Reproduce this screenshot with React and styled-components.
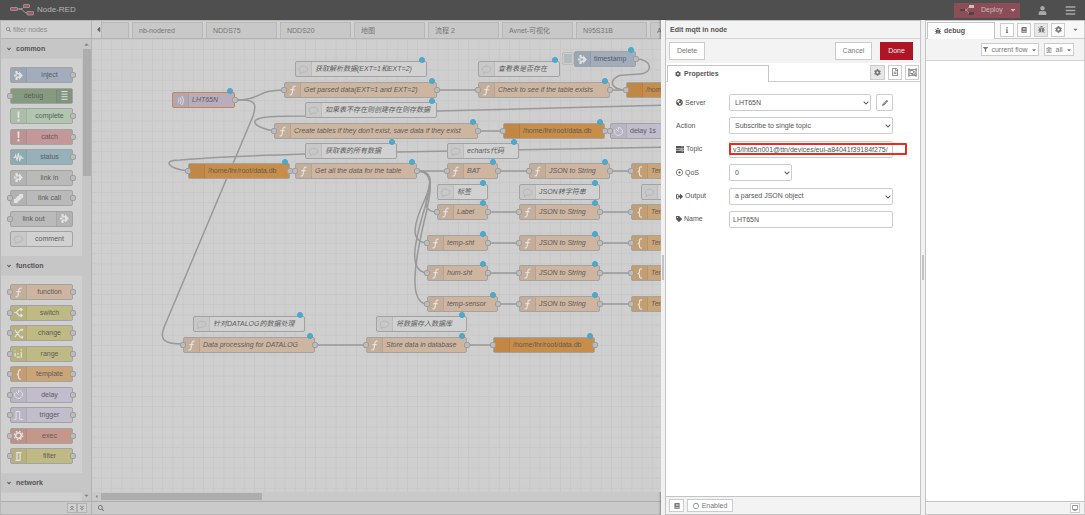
import React from 'react';
import styled, { createGlobalStyle, css } from 'styled-components';
import {
  FaAngleDoubleDown,
  FaAngleDoubleUp,
  FaAngleDown,
  FaBars,
  FaBook,
  FaBug,
  FaCaretDown,
  FaCaretLeft,
  FaCaretUp,
  FaChevronDown,
  FaCog,
  FaDesktop,
  FaFilter,
  FaGlobeAmericas,
  FaInfo,
  FaPencilAlt,
  FaRegCircle,
  FaRegDotCircle,
  FaRegFileAlt,
  FaRegObjectGroup,
  FaRegTrashAlt,
  FaSearch,
  FaSignOutAlt,
  FaTag,
  FaUser
} from 'react-icons/fa';

const colors = {
  inject: '#a1adbc',
  debug: '#869a80',
  complete: '#b1c6af',
  catch: '#c49899',
  status: '#96b1ba',
  link: '#bababa',
  comment: '#d1d1d1',
  function: '#cdb5a0',
  logic: '#bfba83',
  template: '#caa578',
  delay: '#c1bdcd',
  exec: '#c5978a',
  database: '#c88d48',
  mqtt: '#b9adbc'
};

const categories = [
  {
    title: 'common',
    nodes: [
      { label: 'inject', type: 'inject', icon: 'arrow', output: true },
      { label: 'debug', type: 'debug', icon: 'list', input: true, right: true },
      { label: 'complete', type: 'complete', icon: 'alert', output: true },
      { label: 'catch', type: 'catch', icon: 'alert', output: true },
      { label: 'status', type: 'status', icon: 'pulse', output: true },
      { label: 'link in', type: 'link', icon: 'arrow', output: true },
      { label: 'link call', type: 'link', icon: 'call', input: true, output: true },
      { label: 'link out', type: 'link', icon: 'arrow', input: true, right: true },
      { label: 'comment', type: 'comment', icon: 'bubble' }
    ]
  },
  {
    title: 'function',
    nodes: [
      { label: 'function', type: 'function', icon: 'func', input: true, output: true },
      { label: 'switch', type: 'logic', icon: 'fork', input: true, output: true },
      { label: 'change', type: 'logic', icon: 'swap', input: true, output: true },
      { label: 'range', type: 'logic', icon: 'range', input: true, output: true },
      { label: 'template', type: 'template', icon: 'brace', input: true, output: true },
      { label: 'delay', type: 'delay', icon: 'timer', input: true, output: true },
      { label: 'trigger', type: 'delay', icon: 'trigger', input: true, output: true },
      { label: 'exec', type: 'exec', icon: 'gear', input: true, output: true },
      { label: 'filter', type: 'logic', icon: 'filter', input: true, output: true }
    ]
  },
  { title: 'network', nodes: [] }
];

const flowTabs = ['nb-nodered', 'NDDS75', 'NDDS20', '地图', '流程 2', 'Avnet-可视化', 'N95S31B', 'A'];

const comment = (x, y, width, label) => ({ x, y, width, label, type: 'comment', icon: 'bubble', italic: true, changed: true });
const func = (x, y, width, label) => ({ x, y, width, label, type: 'function', icon: 'func', italic: true, input: true, output: true, changed: true });
const database = (x, y) => ({ x, y, width: 102, label: '/home/lhr/root/data.db', type: 'database', input: true, output: true, changed: true });
const template = (x, y) => ({ x, y, width: 72, label: 'Template', type: 'template', icon: 'brace', italic: true, input: true, output: true, changed: true });

// positions are relative to the top left corner of the canvas
const flowNodes = [
  { x: 80, y: 53, width: 63, label: 'LHT65N', type: 'mqtt', icon: 'waves', italic: true, output: true, changed: true, selected: true },
  comment(203, 22, 132, '获取解析数据(EXT=1和EXT=2)'),
  func(192, 43, 153, 'Get parsed data(EXT=1 and EXT=2)'),
  comment(213, 63, 132, '如果表不存在则创建存在则存数据'),
  func(182, 84, 204, "Create tables if they don't exist, save data if they exist"),
  comment(213, 104, 92, '获取表的所有数据'),
  database(96, 124),
  func(203, 124, 122, 'Get all the data for the table'),
  comment(386, 22, 82, '查看表是否存在'),
  func(386, 43, 132, 'Check to see if the table exists'),
  { x: 482, y: 12, width: 62, label: 'timestamp', type: 'inject', icon: 'arrow', output: true, changed: true, button: true },
  database(534, 43),
  database(411, 84),
  { x: 518, y: 84, width: 62, label: 'delay 1s', type: 'delay', icon: 'timer', input: true, output: true },
  comment(355, 104, 72, 'echarts代码'),
  func(355, 124, 51, 'BAT'),
  func(437, 124, 81, 'JSON to String'),
  template(539, 124),
  comment(345, 145, 51, '标签'),
  comment(427, 145, 81, 'JSON转字符串'),
  comment(549, 145, 62, 'Key'),
  func(345, 165, 51, 'Label'),
  func(427, 165, 81, 'JSON to String'),
  template(539, 165),
  func(335, 196, 61, 'temp-sht'),
  func(427, 196, 81, 'JSON to String'),
  template(539, 196),
  func(335, 226, 61, 'hum-sht'),
  func(427, 226, 81, 'JSON to String'),
  template(539, 226),
  func(335, 257, 71, 'temp-sensor'),
  func(427, 257, 81, 'JSON to String'),
  template(539, 257),
  comment(101, 277, 112, '针对DATALOG的数据处理'),
  func(91, 298, 132, 'Data processing for DATALOG'),
  comment(284, 277, 91, '将数据存入数据库'),
  func(274, 298, 101, 'Store data in database'),
  database(401, 298)
];

const wires = [
  'M143 61C170 61 164 51 192 51',
  'M143 61H150C163 61 165 65 161 77L73 286C67 300 70 305 91 305',
  'M182 92C160 88 159 81 169 79C176 77 200 77 213 77L345 72L580 66',
  'M96 132C74 129 71 121 88 121C110 119 150 117 213 115L305 113L580 108',
  'M198 132H203',
  'M345 51H386',
  'M518 51H534',
  'M544 20C560 20 562 34 548 35C530 36 528 35 522 40C518 45 522 51 534 51',
  'M386 92H411',
  'M513 92H518',
  'M325 132H355',
  'M325 132C341 132 339 142 336 154C332 166 334 173 345 173',
  'M325 132C342 132 339 146 333 160C322 184 317 203 335 204',
  'M325 132C343 132 339 150 333 168C322 205 316 232 335 234',
  'M325 132C344 132 339 155 332 183C323 222 316 264 335 265',
  'M406 132H437',
  'M518 132H539',
  'M396 173H427',
  'M508 173H539',
  'M396 204H427',
  'M508 204H539',
  'M396 234H427',
  'M508 234H539',
  'M406 265H427',
  'M508 265H539',
  'M223 306H274',
  'M375 306H401'
];

const GlobalStyle = createGlobalStyle`
  * {
    box-sizing: border-box;
  }

  body {
    margin: 0;
    background: #f3f3f3;
  }

  body, button, input, select {
    font-family: "Liberation Sans", "Noto Sans CJK SC", sans-serif;
    font-size: 7px;
    line-height: 10px;
    color: #555;
  }

  button {
    cursor: pointer;
    padding: 0;
  }

  svg {
    flex: none;
  }
`;

const Page = styled.div`
  display: grid;
  grid-template-rows: 20px minmax(0, 1fr);
  height: 100vh;
  overflow: hidden;
`;

const Header = styled.header`
  display: flex;
  align-items: center;
  padding: 0 9px 0 10px;
  background: #4f4f4f;
  color: #b5b5b5;
`;

const Brand = styled.div`
  display: flex;
  align-items: center;
  gap: 3px;
  margin-right: auto;
  font-size: 8px;
`;

const DeployButton = styled.button`
  display: flex;
  align-items: center;
  justify-content: space-between;
  width: 66px;
  height: 15px;
  padding: 0 3px 0 6px;
  border: 0;
  background: #8c4d57;
  color: #c8bdbf;

  span {
    margin: 0 auto 0 6px;
  }
`;

const HeaderButton = styled.button`
  display: flex;
  margin-left: 18px;
  border: 0;
  background: none;
  color: #a8a8a8;
`;

const Main = styled.main`
  display: grid;
  grid-template-columns: 92px minmax(0, 1fr) 4px 256px 4px 160px;
  min-height: 0;
`;

const Column = styled.div`
  display: flex;
  flex-direction: column;
  min-width: 0;
  min-height: 0;
  border-bottom: 1px solid ${props => (props.$shaded ? '#b5b5b5' : '#c4c4c4')};
  background: ${props => props.$background || '#fff'};
`;

const Palette = styled(Column)`
  border-left: 1px solid #b8b8b8;
  border-right: 1px solid #b3b3b3;
`;

const SearchBox = styled.label`
  display: flex;
  align-items: center;
  gap: 2px;
  height: 19px;
  padding: 0 5px;
  border-top: 1px solid #b8b8b8;
  border-bottom: 1px solid #b3b3b3;
  background: #d0d0d0;
  color: #858585;

  input {
    width: 100%;
    padding: 0;
    border: 0;
    background: none;
    outline: none;
  }

  input::placeholder {
    color: #8b8b8b;
  }
`;

const PaletteScroll = styled.div`
  display: grid;
  grid-template-columns: minmax(0, 1fr) 9px;
  flex: 1;
  min-height: 0;
`;

const PaletteList = styled.div`
  overflow: hidden;
  background: #d0d0d0;
`;

const CategoryTitle = styled.button`
  display: flex;
  align-items: center;
  gap: 4px;
  width: 100%;
  height: 20px;
  padding-left: 5px;
  border: 0;
  border-bottom: 1px solid #c9c9c9;
  background: #c6c6c6;
  color: #555;
  font-weight: bold;
`;

const CategoryBody = styled.div`
  display: flex;
  flex-direction: column;
  justify-content: space-between;
  min-height: 197px;
  padding: 8px 9px 9px;
`;

const VerticalScrollbar = styled.div`
  display: flex;
  flex-direction: column;
  justify-content: space-between;
  align-items: center;
  padding: 2px 0;
  background: #c6c6c6;
  color: #858585;
`;

const VerticalThumb = styled.div`
  width: 8px;
  height: 127px;
  margin: 1px 0 auto;
  background: #adadad;
`;

const Footer = styled.footer`
  display: flex;
  align-items: center;
  height: 13px;
  padding: 0 4px 0 6px;
  border-top: 1px solid #aeaeae;
  background: #cacaca;
  color: #777;
`;

const CollapseButton = styled.button`
  display: flex;
  align-items: center;
  justify-content: center;
  width: 10px;
  height: 10px;
  border: 1px solid #b2b2b2;
  background: #d0d0d0;
  color: #888;

  &:first-child {
    margin-left: auto;
  }
`;

const IconCell = styled.span`
  display: flex;
  align-items: center;
  justify-content: center;
  order: ${props => (props.$right ? 1 : 0)};
  width: 16px;
  background: rgba(0, 0, 0, 0.04);
  border-right: ${props => (props.$right ? 0 : '1px solid rgba(0, 0, 0, 0.06)')};
  border-left: ${props => (props.$right ? '1px solid rgba(0, 0, 0, 0.06)' : 0)};
`;

const NodeLabel = styled.span`
  flex: 1;
  white-space: nowrap;
`;

const nodeBox = css`
  position: relative;
  display: flex;
  height: 16px;
  border: 1px solid #a3a3a3;
  border-radius: 2px;
  background: ${props => colors[props.$type]};
  color: #5c5c5c;
  line-height: 14px;
`;

const PaletteNode = styled.div`
  ${nodeBox}
  text-align: center;
`;

const FlowNode = styled.div`
  ${nodeBox}
  position: absolute;
  left: ${props => props.$x}px;
  top: ${props => props.$y}px;
  width: ${props => props.$width}px;
  border-color: ${props => (props.$selected ? '#cb8450' : '#a3a3a3')};
  font-style: ${props => (props.$italic ? 'italic' : 'normal')};

  ${NodeLabel} {
    padding-left: 3px;
  }
`;

const Port = styled.span`
  position: absolute;
  top: 4px;
  ${props => props.$side}: -4px;
  width: 6px;
  height: 6px;
  border: 1px solid #9e9e9e;
  border-radius: 2px;
  background: #bcbcbc;
`;

const ChangedDot = styled.span`
  position: absolute;
  top: -5px;
  right: 1px;
  width: 6px;
  height: 6px;
  border: 1px solid #55a0bd;
  border-radius: 50%;
  background: #45acd3;
`;

const InjectButton = styled.button`
  position: absolute;
  top: 0;
  left: -13px;
  width: 12px;
  height: 13px;
  border: 1px solid #bdbdbd;
  border-radius: 2px;
  background: #b3bbc1;
  box-shadow: inset 0 0 0 1px #cccccc;
`;

const TabBar = styled.nav`
  display: flex;
  align-items: flex-end;
  gap: 3px;
  height: 19px;
  overflow: hidden;
  border-top: 1px solid #b8b8b8;
  border-bottom: 1px solid #b3b3b3;
  background: #d0d0d0;
`;

const TabScroll = styled.button`
  display: flex;
  align-items: center;
  flex: none;
  width: 10px;
  height: 17px;
  margin-right: -3px;
  padding-left: 2px;
  border: 0;
  border-right: 1px solid #b8b8b8;
  background: #d0d0d0;
  color: #666;
`;

const FlowTab = styled.button`
  flex: none;
  width: ${props => (props.$cut ? 27 : 71)}px;
  height: 16px;
  padding-left: 6px;
  border: 1px solid #b8b8b8;
  border-width: 1px 1px 0 ${props => (props.$cut ? 0 : 1)}px;
  background: #c8c8c8;
  color: #777;
  text-align: left;
`;

const Canvas = styled.div`
  position: relative;
  flex: 1;
  min-height: 0;
  overflow: hidden;
  background: #cfcfcf;
`;

const CanvasDrawing = styled.svg`
  display: block;
  width: 100%;
  height: 100%;
`;

const HorizontalScrollbar = styled.div`
  display: flex;
  align-items: center;
  gap: 2px;
  height: 9px;
  padding-left: 2px;
  background: #c9c9c9;
  color: #858585;
`;

const HorizontalThumb = styled.div`
  width: 161px;
  height: 7px;
  background: #adadad;
`;

const Splitter = styled.div`
  display: flex;
  align-items: center;
  justify-content: center;
  background: #f1f1f1;
  box-shadow: ${props => (props.$shadow ? '-1px 0 2px rgba(0, 0, 0, 0.3)' : 'none')};

  &::after {
    content: '';
    width: 2px;
    height: 25px;
    background: #c4c4c4;
  }
`;

const Tray = styled(Column)`
  border-left: 1px solid #c4c4c4;
  border-right: 1px solid #c4c4c4;
`;

const TrayTitle = styled.h1`
  height: 19px;
  margin: 0;
  padding: 0 4px;
  border-top: 1px solid #c4c4c4;
  border-bottom: 1px solid #d4d4d4;
  background: #f3f3f3;
  font-size: 7px;
  line-height: 18px;
`;

const TrayActions = styled.div`
  display: flex;
  align-items: center;
  gap: 8px;
  height: 24px;
  padding: 0 7px 0 3px;
  background: #f3f3f3;
`;

const Button = styled.button`
  display: flex;
  align-items: center;
  justify-content: center;
  gap: 3px;
  min-width: ${props => props.$width || 36}px;
  height: ${props => props.$height || 18}px;
  margin-left: ${props => (props.$push ? 'auto' : 0)};
  border: 1px solid ${props => (props.$primary ? '#ad1625' : '#ccc')};
  background: ${props => (props.$primary ? '#ad1625' : props.$active ? '#e7e7e7' : '#fff')};
  color: ${props => (props.$primary ? '#eee' : '#777')};
`;

const TrayTabs = styled.div`
  display: flex;
  align-items: center;
  gap: 3px;
  height: 19px;
  padding: 0 1px;
  border-bottom: 1px solid #ccc;
`;

const ActiveTab = styled.button`
  display: flex;
  align-items: center;
  align-self: flex-end;
  gap: 3px;
  width: ${props => props.$width}px;
  height: 17px;
  margin-bottom: -1px;
  margin-right: auto;
  padding-left: 7px;
  border: 1px solid #c4c4c4;
  border-bottom: 0;
  background: #fff;
  font-weight: bold;
`;

const Form = styled.form`
  display: flex;
  flex-direction: column;
  justify-content: space-between;
  min-height: 134px;
  margin-top: 12px;
  padding: 0 27px 0 10px;
`;

const FormRow = styled.div`
  position: relative;
  display: grid;
  grid-template-columns: 53px minmax(0, 1fr) auto;
  align-items: center;

  label {
    display: flex;
    align-items: center;
    gap: 2px;
  }
`;

const control = css`
  width: 100%;
  height: 17px;
  border: 1px solid #ccc;
  border-radius: 2px;
  background: #fff;
  outline: none;
`;

const TextInput = styled.input`
  ${control}
  padding: 0 3px;
`;

const SelectBox = styled.div`
  position: relative;
  width: ${props => (props.$short ? '63px' : '100%')};

  select {
    ${control}
    appearance: none;
    padding: 0 5px;
  }

  svg {
    position: absolute;
    top: 6px;
    right: 2px;
    pointer-events: none;
  }
`;

const EditButton = styled(Button)`
  margin-left: 5px;
  border-radius: 2px;
`;

// red frame drawn over the topic field
const Highlight = styled.span`
  position: absolute;
  top: 2px;
  right: -14px;
  bottom: 3px;
  left: 53px;
  border: 2px solid #f0281e;
  border-radius: 1px;
  pointer-events: none;
`;

const TrayFooter = styled(Footer)`
  gap: 3px;
  height: 18px;
  margin-top: auto;
  padding: 0 3px;
  border-color: #c4c4c4;
  background: #f3f3f3;
`;

const Sidebar = styled(Column)`
  border-left: 1px solid #c4c4c4;
  border-right: 1px solid #ccc;
`;

const SidebarTabs = styled.div`
  display: flex;
  align-items: center;
  gap: 3px;
  height: 19px;
  padding: 0 4px 0 1px;
  border-top: 1px solid #c4c4c4;
  border-bottom: 1px solid #ccc;
  background: #f8f8f8;
`;

const MenuCaret = styled.button`
  display: flex;
  margin: 0 1px 0 4px;
  border: 0;
  background: none;
  color: #777;
`;

const SidebarTools = styled.div`
  display: flex;
  align-items: center;
  justify-content: flex-end;
  gap: 5px;
  height: 22px;
  padding: 0 10px 0 0;
  border-bottom: 1px solid #d4d4d4;
  background: #f3f3f3;
`;

const SidebarFooter = styled(Footer)`
  margin-top: auto;
  border-color: #c4c4c4;
  background: #f3f3f3;
`;

const shapes = {
  arrow: (
    <g fill="currentColor" stroke="none">
      <path d="M4 1.500h3.500v2c0 .8.500 1.300 1.300 1.300H10V2l6 7-6 7v-2.800H8.800c-.8 0-1.300.500-1.300 1.300v2H4v-3c0-2 1.200-3 3-3h3V7.500H7c-1.800 0-3-1-3-3z" />
      <path d="M1.500 7.500H6v3H1.500z" />
    </g>
  ),
  list: <path d="M4 2.500h10M4 6.700h10M4 11h10M4 15.300h10" strokeWidth="1.600" />,
  alert: <path d="M7.200 1h3.600l-.6 10.400H7.800zM7.400 13.400h3.200V17H7.400z" fill="currentColor" stroke="none" />,
  pulse: <path d="M1 9h2l1.500-4 2 9L9 2l2 13 2-8 1.500 3H17" strokeWidth="1.700" />,
  call: <path d="M10 1.500h6.500V8h-2.300C13 10.500 10.500 13 8 14v2.500H1.500V10h2.300C5 7.500 7.500 5 10 4z" fill="currentColor" stroke="none" />,
  bubble: <path d="M9 3.500c4.100 0 7 2.200 7 5s-2.900 5-7 5H7.200L4 16v-3.600C2.700 11.500 2 10 2 8.500c0-2.800 2.900-5 7-5z" strokeWidth="1.300" />,
  func: <path d="M14 2.200c-3-1.100-4 .4-4.400 3.200L8.400 13c-.4 2.700-1.700 3.800-4.200 2.800M5.500 7.600h7" />,
  fork: <path d="M2 9h3.500L10 4h5M5.500 9l4.500 5h5M12.500 1.500L15 4l-2.500 2.500M12.500 11.500L15 14l-2.500 2.500" />,
  swap: <path d="M3 3l9 12h4M3 15L12 3h4M14 1l2 2-2 2M14 13l2 2-2 2" strokeWidth="1.700" />,
  range: <path d="M3.500 8v6M3.500 4v1.500M8 8v3M13.500 6v10M13.500 1.500v2M6 15h5" />,
  brace: <path d="M13 1.500h-1.500C9.500 1.500 9 2.500 9 4v2.500C9 8 8.300 9 6 9c2.300 0 3 1 3 2.500V14c0 1.500.5 2.500 2.500 2.500H13" />,
  timer: <path d="M9 2.500A6.500 6.500 0 1 1 3 6.500M9 2.500V6M9 9L5 5" strokeWidth="1.500" />,
  trigger: <path d="M1 15.500h4V2.500h6v13h6" strokeWidth="1.600" />,
  gear: (
    <g>
      <circle cx="9" cy="9" r="4.600" strokeWidth="2.600" />
      <circle cx="9" cy="9" r="7" strokeWidth="2" strokeDasharray="2.750 2.750" />
    </g>
  ),
  filter: <path d="M5 2.500h9M4 15.500h8M6.500 2.500v13M11.500 2.500v13" />,
  waves: <path d="M5 5.500c1.500 2.200 1.500 4.800 0 7M8 3.500c2.600 3.500 2.600 7.500 0 11M11 1.500c3.700 4.700 3.700 10.300 0 15" strokeWidth="1.500" />
};

const NodeIcon = ({ name, dark }) => (
  <svg
    width="11"
    height="11"
    viewBox="0 0 18 18"
    fill="none"
    stroke="currentColor"
    strokeWidth="2"
    color={dark ? '#b2b2b2' : '#e2e2e2'}
    aria-hidden="true"
  >
    {shapes[name]}
  </svg>
);

const NodeContent = ({ node }) => (
  <>
    <IconCell $right={node.right}>
      {node.icon && <NodeIcon name={node.icon} dark={node.type === 'comment'} />}
    </IconCell>
    <NodeLabel>{node.label}</NodeLabel>
    {node.input && <Port $side="left" />}
    {node.output && <Port $side="right" />}
  </>
);

const Logo = () => (
  <svg width="24" height="12" viewBox="0 0 24 12" aria-hidden="true">
    <path d="M7 5h3c4 0 3-3 7-3M9 5c5 0 4 4 9 4" fill="none" stroke="#a3a3a3" />
    <g fill="#a4595d" stroke="#a8a8a8" strokeWidth="0.700">
      <rect x="0.500" y="3.500" width="7" height="3" rx="0.500" />
      <rect x="13.500" y="0.500" width="6" height="3" rx="0.500" />
      <rect x="17" y="7.500" width="6.500" height="3.500" rx="0.500" />
    </g>
  </svg>
);

const DeployIcon = () => (
  <svg width="15" height="10" viewBox="0 0 15 10" aria-hidden="true">
    <path d="M4 5h2c2 0 1-3 4-3M5 5c3 0 2 3 5 3" fill="none" stroke="#b9a5a8" strokeWidth="0.800" />
    <path d="M0 4h5v2H0zM9 7h5v3H9z" fill="#4b4547" />
    <path d="M9 0h5v3H9z" fill="#c9c2c3" />
  </svg>
);

const TopicIcon = () => (
  <svg width="8" height="7" viewBox="0 0 8 7" aria-hidden="true">
    <path d="M0 0h8v2H0zM0 2.500h8v2H0zM0 5h8v2H0z" fill="#555" />
    <path d="M5 .7h2.300M3.500 3.500h3.800M5.500 5.700h1.800" stroke="#ccc" strokeWidth="0.600" />
  </svg>
);

const SelectField = ({ id, value, short }) => (
  <SelectBox $short={short}>
    <select id={id} defaultValue={value}>
      <option>{value}</option>
    </select>
    <FaChevronDown size={6} />
  </SelectBox>
);

const PalettePanel = () => (
  <Palette $shaded $background="#cacaca">
    <SearchBox>
      <FaSearch size={5} />
      <input type="text" placeholder="filter nodes" aria-label="filter nodes" />
    </SearchBox>
    <PaletteScroll>
      <PaletteList>
        {categories.map(category => (
          <section key={category.title}>
            <CategoryTitle type="button">
              <FaAngleDown size={6} />
              {category.title}
            </CategoryTitle>
            <CategoryBody>
              {category.nodes.map(node => (
                <PaletteNode key={node.label} $type={node.type}>
                  <NodeContent node={node} />
                </PaletteNode>
              ))}
            </CategoryBody>
          </section>
        ))}
      </PaletteList>
      <VerticalScrollbar>
        <FaCaretUp size={7} />
        <VerticalThumb />
        <FaCaretDown size={7} />
      </VerticalScrollbar>
    </PaletteScroll>
    <Footer>
      <CollapseButton type="button" aria-label="Collapse all">
        <FaAngleDoubleUp size={6} />
      </CollapseButton>
      <CollapseButton type="button" aria-label="Expand all">
        <FaAngleDoubleDown size={6} />
      </CollapseButton>
    </Footer>
  </Palette>
);

const Workspace = () => (
  <Column $shaded $background="#cfcfcf">
    <TabBar>
      <TabScroll type="button" aria-label="Scroll tabs left">
        <FaCaretLeft size={9} />
      </TabScroll>
      <FlowTab type="button" $cut aria-label="Previous flow" />
      {flowTabs.map(tab => (
        <FlowTab type="button" key={tab}>{tab}</FlowTab>
      ))}
    </TabBar>
    <Canvas>
      <CanvasDrawing>
        <defs>
          <pattern id="grid" x="9" y="0" width="10.200" height="10.200" patternUnits="userSpaceOnUse">
            <path d="M0.500 0V10.200M0 0.500H10.200" stroke="#c6c6c6" strokeWidth="0.800" />
          </pattern>
        </defs>
        <rect width="100%" height="100%" fill="url(#grid)" />
        <g fill="none" stroke="#999" strokeWidth="1.500">
          {wires.map(d => (
            <path key={d} d={d} />
          ))}
        </g>
      </CanvasDrawing>
      {flowNodes.map(node => (
        <FlowNode
          key={`${node.x}-${node.y}`}
          $x={node.x}
          $y={node.y}
          $width={node.width}
          $type={node.type}
          $italic={node.italic}
          $selected={node.selected}
        >
          <NodeContent node={node} />
          {node.button && <InjectButton type="button" aria-label="Inject" />}
          {node.changed && <ChangedDot />}
        </FlowNode>
      ))}
    </Canvas>
    <HorizontalScrollbar>
      <FaCaretLeft size={5} />
      <HorizontalThumb />
    </HorizontalScrollbar>
    <Footer>
      <FaSearch size={6} />
    </Footer>
  </Column>
);

const EditTray = () => (
  <Tray>
    <TrayTitle>Edit mqtt in node</TrayTitle>
    <TrayActions>
      <Button type="button">Delete</Button>
      <Button type="button" $push $width={37}>Cancel</Button>
      <Button type="button" $primary $width={33}>Done</Button>
    </TrayActions>
    <TrayTabs>
      <ActiveTab type="button" $width={102}>
        <FaCog size={6} />
        Properties
      </ActiveTab>
      <Button type="button" $width={15} $height={15} $active aria-label="Properties">
        <FaCog size={7} />
      </Button>
      <Button type="button" $width={14} $height={15} aria-label="Description">
        <FaRegFileAlt size={8} />
      </Button>
      <Button type="button" $width={14} $height={15} aria-label="Appearance">
        <FaRegObjectGroup size={9} />
      </Button>
    </TrayTabs>
    <Form>
      <FormRow>
        <label htmlFor="server"><FaGlobeAmericas size={7} />Server</label>
        <SelectField id="server" value="LHT65N" />
        <EditButton type="button" $width={17} $height={17} aria-label="Edit server">
          <FaPencilAlt size={6} />
        </EditButton>
      </FormRow>
      <FormRow>
        <label htmlFor="action">Action</label>
        <SelectField id="action" value="Subscribe to single topic" />
      </FormRow>
      <FormRow>
        <label htmlFor="topic"><TopicIcon />Topic</label>
        <TextInput id="topic" type="text" defaultValue="v3/lht65n001@ttn/devices/eui-a84041f39184f275/" />
        <Highlight />
      </FormRow>
      <FormRow>
        <label htmlFor="qos"><FaRegDotCircle size={7} />QoS</label>
        <SelectField id="qos" value="0" short />
      </FormRow>
      <FormRow>
        <label htmlFor="output"><FaSignOutAlt size={7} />Output</label>
        <SelectField id="output" value="a parsed JSON object" />
      </FormRow>
      <FormRow>
        <label htmlFor="name"><FaTag size={6} />Name</label>
        <TextInput id="name" type="text" defaultValue="LHT65N" />
      </FormRow>
    </Form>
    <TrayFooter>
      <Button type="button" $width={15} $height={13} aria-label="Help">
        <FaBook size={6} />
      </Button>
      <Button type="button" $width={46} $height={13}>
        <FaRegCircle size={6} />
        Enabled
      </Button>
    </TrayFooter>
  </Tray>
);

const DebugSidebar = () => (
  <Sidebar>
    <SidebarTabs>
      <ActiveTab type="button" $width={68}>
        <FaBug size={6} />
        debug
      </ActiveTab>
      <Button type="button" $width={14} $height={14} aria-label="Information">
        <FaInfo size={6} />
      </Button>
      <Button type="button" $width={14} $height={14} aria-label="Help">
        <FaBook size={6} />
      </Button>
      <Button type="button" $width={14} $height={14} $active aria-label="Debug">
        <FaBug size={7} />
      </Button>
      <Button type="button" $width={14} $height={14} aria-label="Configuration">
        <FaCog size={7} />
      </Button>
      <MenuCaret type="button" aria-label="More tabs">
        <FaCaretDown size={7} />
      </MenuCaret>
    </SidebarTabs>
    <SidebarTools>
      <Button type="button" $width={58} $height={13}>
        <FaFilter size={5} />
        current flow
        <FaCaretDown size={6} />
      </Button>
      <Button type="button" $width={30} $height={13}>
        <FaRegTrashAlt size={6} />
        all
        <FaCaretDown size={6} />
      </Button>
    </SidebarTools>
    <SidebarFooter>
      <Button type="button" $push $width={10} $height={10} aria-label="Open debug window">
        <FaDesktop size={6} />
      </Button>
    </SidebarFooter>
  </Sidebar>
);

export class App extends React.Component {
  render() {
    return (
      <Page>
        <GlobalStyle />
        <Header>
          <Brand>
            <Logo />
            Node-RED
          </Brand>
          <DeployButton type="button">
            <DeployIcon />
            <span>Deploy</span>
            <FaCaretDown size={8} />
          </DeployButton>
          <HeaderButton type="button" aria-label="User">
            <FaUser size={9} />
          </HeaderButton>
          <HeaderButton type="button" aria-label="Menu">
            <FaBars size={11} />
          </HeaderButton>
        </Header>
        <Main>
          <PalettePanel />
          <Workspace />
          <Splitter $shadow />
          <EditTray />
          <Splitter />
          <DebugSidebar />
        </Main>
      </Page>
    );
  }
}

export default App;
